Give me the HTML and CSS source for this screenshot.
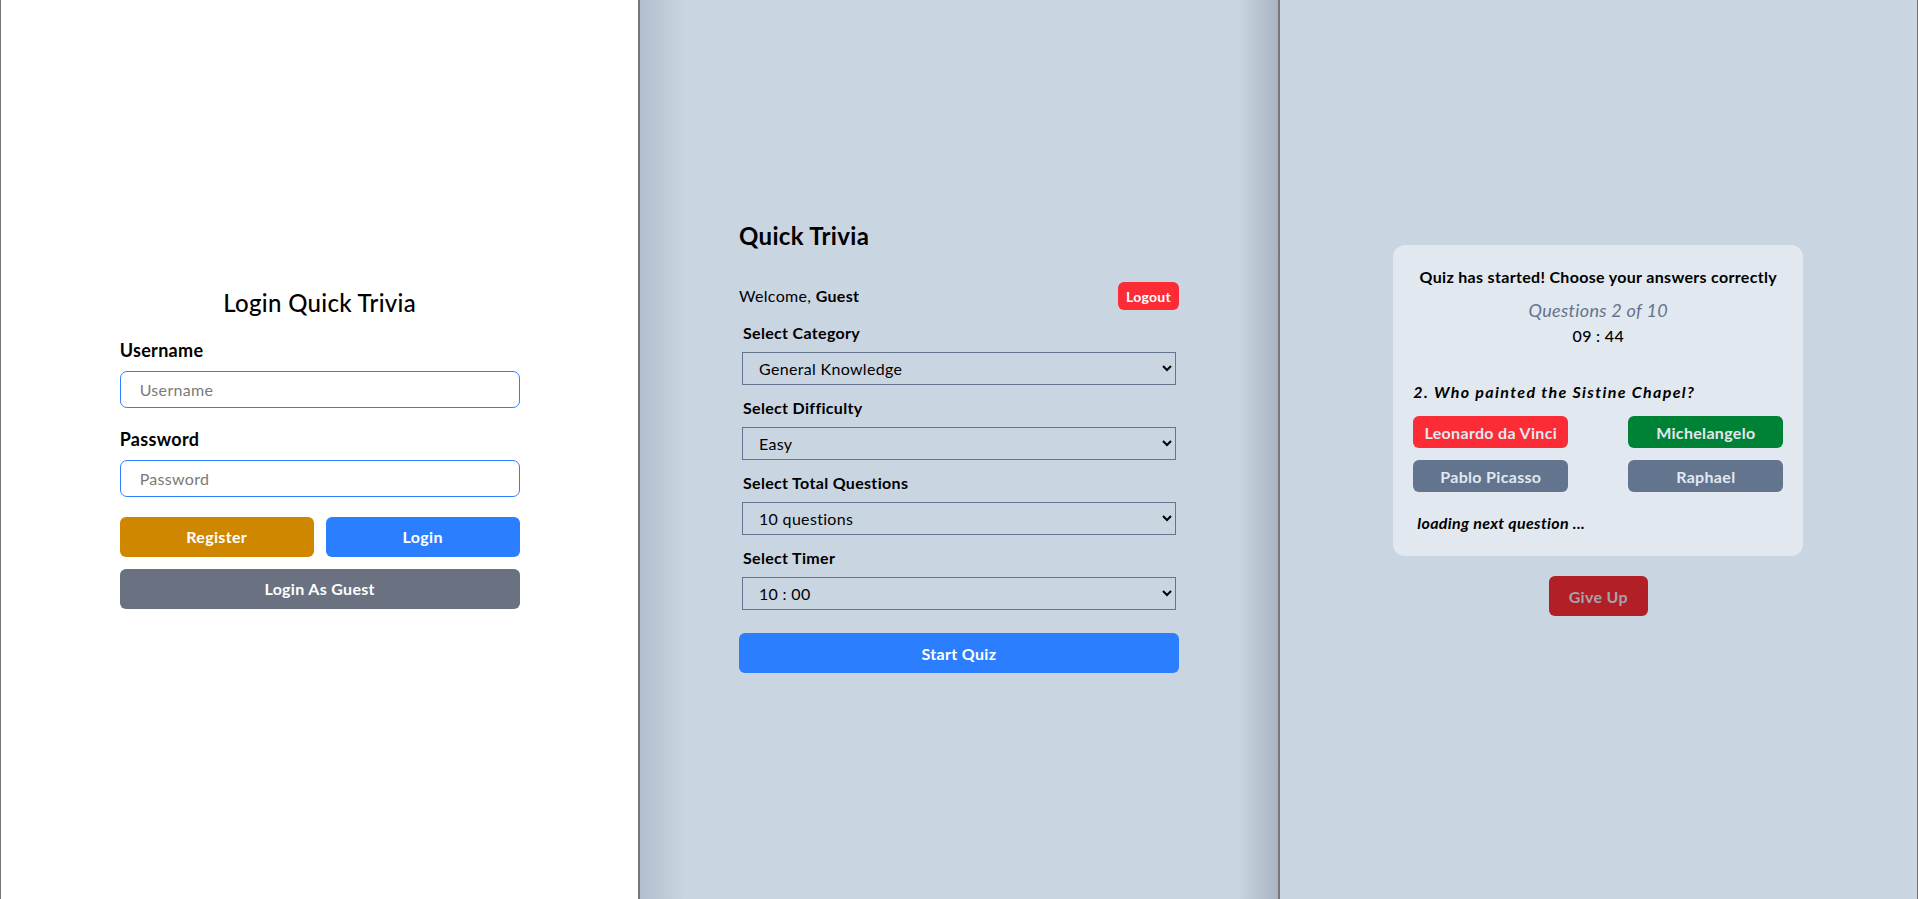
FILE: index.html
```html
<!DOCTYPE html>
<html lang="en">
<head>
<meta charset="utf-8">
<title>Quick Trivia</title>
<link rel="stylesheet" href="styles.css">
</head>
<body>
<div class="screens">
  <section class="panel panel-login">
    <form class="login-form">
      <h2 class="login-title">Login Quick Trivia</h2>
      <label class="field-label" for="u">Username</label>
      <input class="text-input" id="u" type="text" placeholder="Username">
      <label class="field-label second" for="p">Password</label>
      <input class="text-input" id="p" type="password" placeholder="Password">
      <div class="btn-row">
        <button type="button" class="btn btn-register">Register</button>
        <button type="button" class="btn btn-login">Login</button>
      </div>
      <button type="button" class="btn btn-guest">Login As Guest</button>
    </form>
  </section>

  <section class="panel panel-setup">
    <div class="setup">
      <h1 class="setup-title">Quick Trivia</h1>
      <div class="welcome-row">
        <span class="welcome">Welcome, <b>Guest</b></span>
        <button type="button" class="btn-logout">Logout</button>
      </div>
      <div class="fields">
        <label class="select-label">Select Category</label>
        <select class="select"><option>General Knowledge</option></select>
        <label class="select-label">Select Difficulty</label>
        <select class="select"><option>Easy</option></select>
        <label class="select-label">Select Total Questions</label>
        <select class="select"><option>10 questions</option></select>
        <label class="select-label">Select Timer</label>
        <select class="select"><option>10 : 00</option></select>
      </div>
      <button type="button" class="btn btn-start">Start Quiz</button>
    </div>
  </section>

  <section class="panel panel-quiz">
    <div class="quiz">
      <div class="quiz-card">
        <p class="quiz-title">Quiz has started! Choose your answers correctly</p>
        <p class="quiz-count">Questions 2 of 10</p>
        <p class="quiz-timer">09 : 44</p>
        <p class="quiz-question">2. Who painted the Sistine Chapel?</p>
        <div class="answers">
          <button type="button" class="answer answer-wrong">Leonardo da Vinci</button>
          <button type="button" class="answer answer-right">Michelangelo</button>
          <button type="button" class="answer">Pablo Picasso</button>
          <button type="button" class="answer">Raphael</button>
        </div>
        <p class="quiz-loading">loading next question ...</p>
      </div>
      <button type="button" class="btn-giveup">Give Up</button>
    </div>
  </section>
</div>
</body>
</html>
```

FILE: styles.css
```css
* { box-sizing: border-box; }

html, body {
  margin: 0;
  height: 100%;
}

body {
  font-family: "Lato", "Liberation Sans", sans-serif;
  letter-spacing: 0.02em;
  color: #000;
  overflow: hidden;
}

button, input, select { letter-spacing: 0.02em; }

.screens {
  display: grid;
  grid-template-columns: 1fr 1fr 1fr;
  height: 899px;
}

.panel {
  border-left: 1px solid #767676;
  border-right: 1px solid #767676;
  display: flex;
  align-items: center;
  justify-content: center;
}

/* ---------- Login ---------- */
.panel-login { background: #fff; }

.login-form {
  width: 400px;
  display: flex;
  flex-direction: column;
  margin-bottom: 4px;
}

.login-title {
  margin: 0 0 18px;
  font-size: 24px;
  line-height: 32px;
  font-weight: 500;
  text-align: center;
}

.field-label {
  font-size: 18px;
  line-height: 27px;
  font-weight: 700;
  margin-bottom: 7px;
}

.field-label.second { margin-top: 18px; }

.text-input {
  height: 37px;
  border: 1px solid #2b7fff;
  border-radius: 7px;
  padding: 0 19px;
  font-family: inherit;
  font-size: 16px;
  outline: none;
}

.text-input::placeholder { color: #7a7a7a; }

.btn {
  border: 0;
  border-radius: 6px;
  height: 40px;
  color: #fff;
  font-family: inherit;
  font-size: 16px;
  font-weight: 700;
  cursor: pointer;
}

.btn-row {
  display: grid;
  grid-template-columns: 1fr 1fr;
  gap: 12px;
  margin-top: 20px;
}

.btn-register { background: #d08700; }
.btn-login { background: #2b7fff; }
.btn-guest { background: #6a7282; margin-top: 12px; }

/* ---------- Setup ---------- */
.panel-setup {
  background:
    linear-gradient(to right, rgba(40, 50, 70, 0.14), rgba(40, 50, 70, 0) 45px,
      rgba(40, 50, 70, 0) calc(100% - 40px), rgba(40, 50, 70, 0.2)),
    #cad5e2;
}

.setup {
  width: 440px;
  display: flex;
  flex-direction: column;
  margin-bottom: 6px;
}

.setup-title {
  margin: 0 0 30px;
  font-size: 24px;
  line-height: 32px;
  font-weight: 700;
}

.welcome-row {
  display: flex;
  justify-content: space-between;
  align-items: center;
  height: 28px;
}

.welcome {
  font-size: 16px;
  line-height: 24px;
}

.btn-logout {
  height: 28px;
  padding: 0 8px;
  border: 0;
  border-radius: 6px;
  background: #fb2c36;
  color: #fff;
  font-family: inherit;
  font-size: 14px;
  font-weight: 700;
}

.fields {
  display: flex;
  flex-direction: column;
  padding: 0 3px;
  margin-top: 11px;
}

.select-label {
  font-size: 16px;
  line-height: 24px;
  font-weight: 700;
  padding-left: 1px;
  margin-bottom: 7px;
}

.select {
  height: 33px;
  margin-bottom: 11px;
  border: 1px solid #62748e;
  border-radius: 0;
  background: transparent;
  padding: 0 10px 0 12px;
  font-family: inherit;
  font-size: 16px;
  color: #000;
}

.select:last-child { margin-bottom: 0; }

.btn-start {
  background: #2b7fff;
  margin-top: 23px;
}

/* ---------- Quiz ---------- */
.panel-quiz { background: #cad5e2; }

.quiz {
  display: flex;
  flex-direction: column;
  align-items: center;
  margin-bottom: 38px;
}

.quiz-card {
  width: 410px;
  background: #e2e8f0;
  border-radius: 12px;
  padding: 20px 20px 21px;
}

.quiz-card p { margin: 0; }

.quiz-title {
  font-size: 16px;
  line-height: 24px;
  font-weight: 700;
  text-align: center;
}

.quiz-count {
  margin-top: 7px !important;
  font-size: 18px;
  line-height: 28px;
  font-style: italic;
  color: #62748e;
  text-align: center;
}

.quiz-timer {
  font-size: 16px;
  line-height: 24px;
  font-weight: 500;
  text-align: center;
}

.quiz-question {
  margin-top: 32px !important;
  font-size: 16px;
  line-height: 24px;
  font-weight: 700;
  font-style: italic;
  letter-spacing: 0.085em;
}

.answers {
  display: grid;
  grid-template-columns: 155px 155px;
  justify-content: space-between;
  row-gap: 12px;
  margin-top: 12px;
}

.answer {
  height: 32px;
  border: 0;
  border-radius: 6px;
  background: #62748e;
  color: #e2e8f0;
  font-family: inherit;
  font-size: 16px;
  font-weight: 700;
}

.answer-wrong { background: #fb2c36; }
.answer-right { background: #008236; }

.quiz-loading {
  margin-top: 19px !important;
  padding-left: 4px;
  font-size: 16px;
  line-height: 24px;
  font-weight: 700;
  font-style: italic;
}

.btn-giveup {
  margin-top: 20px;
  height: 40px;
  padding: 0 20px;
  border: 0;
  border-radius: 6px;
  background: #b21f27;
  color: #a8a2aa;
  font-family: inherit;
  font-size: 16px;
  font-weight: 700;
}
```
